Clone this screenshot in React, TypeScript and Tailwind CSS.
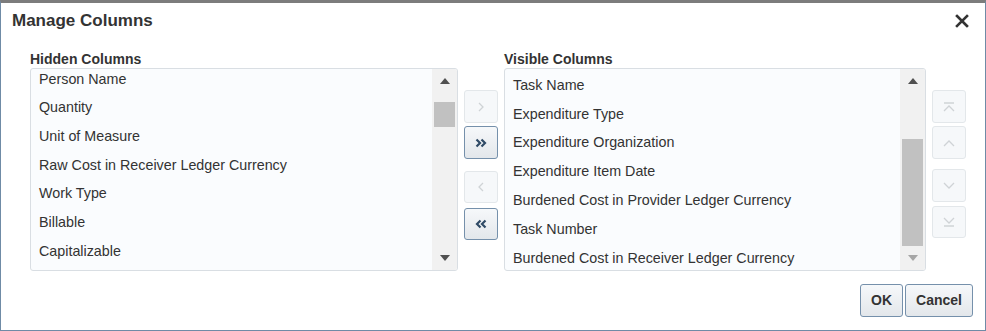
import React from 'react';

const hidden = [
  'Person Name',
  'Quantity',
  'Unit of Measure',
  'Raw Cost in Receiver Ledger Currency',
  'Work Type',
  'Billable',
  'Capitalizable',
];

const visible = [
  'Task Name',
  'Expenditure Type',
  'Expenditure Organization',
  'Expenditure Item Date',
  'Burdened Cost in Provider Ledger Currency',
  'Task Number',
  'Burdened Cost in Receiver Ledger Currency',
];

const font = { fontFamily: '"Liberation Sans", Arial, sans-serif' };

const Up = ({ color }: { color: string }) => (
  <svg width="10" height="6" viewBox="0 0 10 6">
    <path d="M0 6 L5 0 L10 6 Z" fill={color} />
  </svg>
);

const Down = ({ color }: { color: string }) => (
  <svg width="10" height="6" viewBox="0 0 10 6">
    <path d="M0 0 L10 0 L5 6 Z" fill={color} />
  </svg>
);

const ListBox = ({
  items,
  width,
  pitch,
  offset,
  thumbTop,
  thumbH,
  downColor,
}: {
  items: string[];
  width: string;
  pitch: string;
  offset: string;
  thumbTop: string;
  thumbH: string;
  downColor: string;
}) => (
  <div className={`${width} h-[203px] flex border border-[#d9dee3] rounded-[3px] bg-[#fafcfe] overflow-hidden`}>
    <div className={`flex-1 ${offset}`}>
      {items.map((t) => (
        <div key={t} className={`${pitch} flex items-center pl-[8px] text-[14.3px] text-[#333]`}>
          {t}
        </div>
      ))}
    </div>
    <div className="w-[25px] h-full bg-[#f1f1f1] flex flex-col items-center relative">
      <div className="h-[24px] flex items-center justify-center">
        <Up color="#505050" />
      </div>
      <div className={`absolute left-[2px] right-[2px] bg-[#c1c1c1] ${thumbTop} ${thumbH}`} />
      <div className="flex-1" />
      <div className="h-[24px] flex items-center justify-center">
        <Down color={downColor} />
      </div>
    </div>
  </div>
);

const ShuttleButton = ({
  enabled,
  children,
  className,
}: {
  enabled?: boolean;
  children: React.ReactNode;
  className?: string;
}) => (
  <div
    className={`w-[34px] flex items-center justify-center rounded-[3px] border ${
      enabled
        ? 'border-[#7590ab] bg-gradient-to-b from-[#f6f8fa] to-[#e3e7eb]'
        : 'border-[#e3e7ea] bg-[#f6f8fa]'
    } ${className ?? ''}`}
  >
    {children}
  </div>
);

const stroke = (enabled: boolean) => (enabled ? '#2f4a66' : '#cfd3d6');

export default function App() {
  return (
    <div
      style={font}
      className="w-[986px] h-[331px] bg-white border-t-[3px] border-t-[#7c7c7c] border-x border-b border-x-[#6f8ba6] border-b-[#6f8ba6] flex flex-col"
    >
      <div className="h-[34px] flex items-center justify-between pt-[2px] pl-[11px] pr-[16px]">
        <span className="text-[17px] font-bold text-[#333]">Manage Columns</span>
        <svg width="14" height="14" viewBox="0 0 14 14">
          <path d="M2 2 L12 12 M12 2 L2 12" stroke="#333" strokeWidth="2.6" strokeLinecap="square" />
        </svg>
      </div>

      <div className="flex items-start pl-[29px]">
        <div className="flex flex-col">
          <div className="h-[31px] flex items-end pb-[1px] text-[14px] leading-[16px] font-bold text-[#333]">
            Hidden Columns
          </div>
          <ListBox
            items={hidden}
            width="w-[428px]"
            pitch="h-[28.67px]"
            offset="-mt-[4px]"
            thumbTop="top-[33px]"
            thumbH="h-[25px]"
            downColor="#505050"
          />
        </div>

        <div className="flex flex-col mx-[6px] mt-[53px]">
          <ShuttleButton className="h-[33px]">
            <svg width="10" height="12" viewBox="0 0 10 12">
              <path d="M3 2 L7 6 L3 10" stroke={stroke(false)} strokeWidth="1.3" fill="none" />
            </svg>
          </ShuttleButton>
          <ShuttleButton enabled className="h-[33px] mt-[3px]">
            <svg width="14" height="12" viewBox="0 0 14 12">
              <path d="M2.5 2.5 L6 6 L2.5 9.5 M7.5 2.5 L11 6 L7.5 9.5" stroke={stroke(true)} strokeWidth="2.2" fill="none" />
            </svg>
          </ShuttleButton>
          <ShuttleButton className="h-[32px] mt-[12px]">
            <svg width="10" height="12" viewBox="0 0 10 12">
              <path d="M7 2 L3 6 L7 10" stroke={stroke(false)} strokeWidth="1.3" fill="none" />
            </svg>
          </ShuttleButton>
          <ShuttleButton enabled className="h-[32px] mt-[5px]">
            <svg width="14" height="12" viewBox="0 0 14 12">
              <path d="M11.5 2.5 L8 6 L11.5 9.5 M6.5 2.5 L3 6 L6.5 9.5" stroke={stroke(true)} strokeWidth="2.2" fill="none" />
            </svg>
          </ShuttleButton>
        </div>

        <div className="flex flex-col">
          <div className="h-[31px] flex items-end pb-[1px] text-[14px] leading-[16px] font-bold text-[#333]">
            Visible Columns
          </div>
          <ListBox
            items={visible}
            width="w-[422px]"
            pitch="h-[28.83px]"
            offset="pt-[2px]"
            thumbTop="top-[70px]"
            thumbH="h-[107px]"
            downColor="#a6a6a6"
          />
        </div>

        <div className="flex flex-col ml-[6px] mt-[53px]">
          <ShuttleButton className="h-[33px]">
            <svg width="14" height="12" viewBox="0 0 14 12">
              <path d="M2 2 L12 2 M2 10 L7 5 L12 10" stroke={stroke(false)} strokeWidth="1.3" fill="none" />
            </svg>
          </ShuttleButton>
          <ShuttleButton className="h-[33px] mt-[3px]">
            <svg width="14" height="12" viewBox="0 0 14 12">
              <path d="M2 9 L7 4 L12 9" stroke={stroke(false)} strokeWidth="1.3" fill="none" />
            </svg>
          </ShuttleButton>
          <ShuttleButton className="h-[33px] mt-[10px]">
            <svg width="14" height="12" viewBox="0 0 14 12">
              <path d="M2 3 L7 8 L12 3" stroke={stroke(false)} strokeWidth="1.3" fill="none" />
            </svg>
          </ShuttleButton>
          <ShuttleButton className="h-[32px] mt-[4px]">
            <svg width="14" height="12" viewBox="0 0 14 12">
              <path d="M2 2 L7 7 L12 2 M2 10 L12 10" stroke={stroke(false)} strokeWidth="1.3" fill="none" />
            </svg>
          </ShuttleButton>
        </div>
      </div>

      <div className="flex justify-end gap-[2px] pr-[12px] mt-[13px]">
        <button className="w-[43px] h-[33px] rounded-[3px] border border-[#7590ab] bg-gradient-to-b from-[#f6f8fa] to-[#e3e7eb] text-[14px] font-bold text-[#333]">
          OK
        </button>
        <button className="w-[68px] h-[33px] rounded-[3px] border border-[#7590ab] bg-gradient-to-b from-[#f6f8fa] to-[#e3e7eb] text-[14px] font-bold text-[#333]">
          Cancel
        </button>
      </div>
    </div>
  );
}
